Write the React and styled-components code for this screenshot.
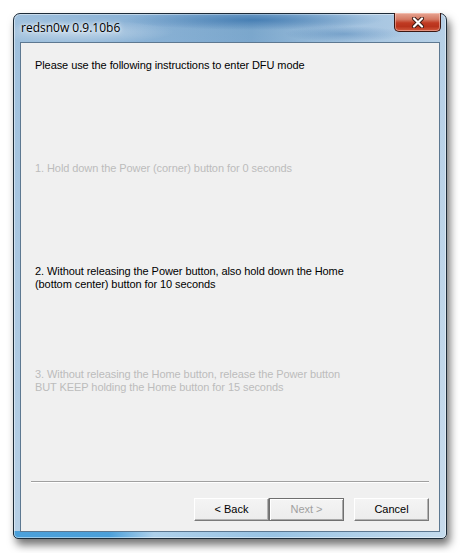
import React from "react";
import styled, { createGlobalStyle } from "styled-components";

const Global = createGlobalStyle`
  html, body { margin: 0; padding: 0; background: #ffffff; }
  body { width: 461px; height: 553px; overflow: hidden; }
`;

const Page = styled.div`
  padding: 13px 0 0 13px;
`;

const Window = styled.div`
  width: 434px;
  height: 526px;
  box-sizing: border-box;
  border: 1px solid #1c2b38;
  border-radius: 7px 7px 5px 5px;
  display: flex;
  flex-direction: column;
  background:
    linear-gradient(90deg, rgba(70,158,218,0.95) 0px, rgba(70,158,218,0.95) 95px, rgba(175,210,236,0.9) 140px, rgba(150,196,230,0.8) 260px, rgba(196,220,238,0.7) 100%) bottom / 100% 7px no-repeat,
    linear-gradient(180deg, rgba(255,255,255,0.0) 0, rgba(255,255,255,0.25) 100%),
    linear-gradient(90deg, #9fc0dd 0%, #89b1d5 30%, #7aa6cc 55%, #a5c4e0 80%, #b6d0e7 100%);
  box-shadow: 3px 6px 9px rgba(0,0,0,0.55), inset 0 0 0 1px rgba(255,255,255,0.45);
  font-family: "Liberation Sans", Arial, sans-serif;
`;

const TitleBar = styled.div`
  height: 28px;
  flex: none;
  display: flex;
  align-items: flex-start;
  justify-content: space-between;
  padding: 0 5px 0 7px;
  background:
    radial-gradient(ellipse 130px 10px at 240px 6px, rgba(30,95,160,0.55), rgba(30,95,160,0) 100%),
    radial-gradient(ellipse 60px 8px at 330px 20px, rgba(30,95,160,0.3), rgba(30,95,160,0) 100%),
    radial-gradient(ellipse 90px 12px at 70px 18px, rgba(255,255,255,0.4), rgba(255,255,255,0) 100%);
`;

const Title = styled.div`
  margin-top: 7px;
  font-family: "Open Sans", "Liberation Sans", sans-serif;
  font-size: 12px;
  line-height: 14px;
  color: #000;
  text-shadow: 0 0 6px rgba(255,255,255,0.9), 0 0 3px rgba(255,255,255,0.9);
`;

const CloseButton = styled.div`
  width: 47px;
  height: 19px;
  margin-top: -1px;
  box-sizing: border-box;
  border: 1px solid #3b1712;
  border-top: none;
  border-radius: 0 0 5px 5px;
  background: linear-gradient(180deg, #e8a593 0%, #d47a64 35%, #c03a22 55%, #b8331c 75%, #d25a3e 100%);
  box-shadow: inset 0 0 0 1px rgba(255,220,210,0.45);
  display: flex;
  align-items: center;
  justify-content: center;
`;

const Client = styled.div`
  flex: 1;
  margin: 0 6px 6px 6px;
  border: 1px solid #5d7891;
  background: #f0f0f0;
  display: flex;
  flex-direction: column;
  font-size: 11px;
  line-height: 13px;
  letter-spacing: -0.08px;
  color: #000;
`;

const Content = styled.div`
  flex: 1;
  padding: 16px 14px 0 14px;
`;

const Block = styled.div`
  height: 103px;
  color: ${(p) => (p.$dim ? "#bcbcbc" : "#000")};
`;

const Footer = styled.div`
  padding: 0 10px 10px 10px;
  display: flex;
  flex-direction: column;
`;

const Separator = styled.div`
  height: 1px;
  background: #a0a0a0;
  border-bottom: 1px solid #ffffff;
  margin-bottom: 15px;
`;

const ButtonRow = styled.div`
  display: flex;
  justify-content: flex-end;
`;

const Button = styled.div`
  width: 75px;
  height: 23px;
  box-sizing: border-box;
  margin-left: ${(p) => p.$gap}px;
  display: flex;
  align-items: center;
  justify-content: center;
  font-size: 11px;
  letter-spacing: 0;
  color: ${(p) => (p.$disabled ? "#a0a0a0" : "#000")};
  background: linear-gradient(180deg, #f4f4f4 0%, #ececec 100%);
  border: 1px solid;
  border-color: ${(p) =>
    p.$default ? "#6f6f6f" : "#ffffff #7a7a7a #7a7a7a #ffffff"};
  box-shadow: ${(p) =>
    p.$default
      ? "inset 1px 1px 0 #ffffff, inset -1px -1px 0 #a8a8a8"
      : "inset -1px -1px 0 #b4b4b4"};
`;

function CloseGlyph() {
  return (
    <svg width="14" height="11" viewBox="0 0 14 11">
      <path
        d="M3 1.5 L11 9.5 M11 1.5 L3 9.5"
        stroke="#3a1a14"
        strokeWidth="4"
        strokeLinecap="round"
      />
      <path
        d="M3 1.5 L11 9.5 M11 1.5 L3 9.5"
        stroke="#ffffff"
        strokeWidth="2.2"
        strokeLinecap="round"
      />
    </svg>
  );
}

export default function App() {
  return (
    <>
      <Global />
      <Page>
        <Window>
          <TitleBar>
            <Title>redsn0w 0.9.10b6</Title>
            <CloseButton>
              <CloseGlyph />
            </CloseButton>
          </TitleBar>
          <Client>
            <Content>
              <Block>Please use the following instructions to enter DFU mode</Block>
              <Block $dim>1. Hold down the Power (corner) button for 0 seconds</Block>
              <Block>
                2. Without releasing the Power button, also hold down the Home
                <br />
                (bottom center) button for 10 seconds
              </Block>
              <Block $dim>
                3. Without releasing the Home button, release the Power button
                <br />
                BUT KEEP holding the Home button for 15 seconds
              </Block>
            </Content>
            <Footer>
              <Separator />
              <ButtonRow>
                <Button $gap={0}>&lt; Back</Button>
                <Button $gap={0} $default $disabled>Next &gt;</Button>
                <Button $gap={10}>Cancel</Button>
              </ButtonRow>
            </Footer>
          </Client>
        </Window>
      </Page>
    </>
  );
}
